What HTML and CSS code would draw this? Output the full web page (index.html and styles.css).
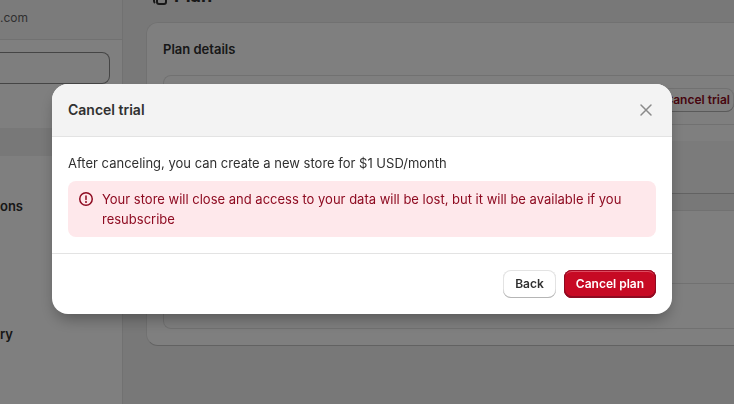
FILE: index.html
```html
<!DOCTYPE html>
<html lang="en">
<head>
    <meta charset="UTF-8">
    <meta name="viewport" content="width=device-width, initial-scale=1.0">
    <title>Cancel trial</title>
    <link rel="stylesheet" href="styles.css">
</head>
<body>
    <div class="page">
        <aside class="sidebar">
            <div class="store">.com</div>
            <div class="search">
                <input type="search" aria-label="Search settings">
            </div>
            <nav class="menu">
                <a href="#" class="active" aria-label="Plan"></a>
                <a href="#" class="permissions">ons</a>
                <a href="#" class="delivery">ry</a>
            </nav>
        </aside>

        <main class="content">
            <h1 class="page-title">
                <svg width="20" height="20" viewBox="0 0 20 20" fill="none" stroke="currentColor" stroke-width="2" aria-hidden="true">
                    <path d="M4 5v8a3 3 0 0 0 1 2"/>
                    <rect x="7" y="4" width="9" height="12" rx="2"/>
                </svg>
                Plan
            </h1>
            <section class="card">
                <div class="card-section">
                    <h2>Plan details</h2>
                    <div class="box plan-box">
                        <button type="button" class="trial-button">Cancel trial</button>
                    </div>
                </div>
                <div class="card-note"></div>
            </section>
            <section class="card">
                <div class="card-section billing">
                    <div class="box billing-box"></div>
                </div>
            </section>
        </main>
    </div>

    <div class="overlay">
        <div class="modal" role="dialog" aria-modal="true" aria-labelledby="modal-title">
            <header class="modal-header">
                <h2 id="modal-title">Cancel trial</h2>
                <button type="button" class="close" aria-label="Close">
                    <svg width="20" height="20" viewBox="0 0 20 20" fill="none" stroke="currentColor" stroke-width="1.5" stroke-linecap="round">
                        <path d="M5 5l10 10M15 5L5 15"/>
                    </svg>
                </button>
            </header>
            <div class="modal-body">
                <p>After canceling, you can create a new store for $1 USD/month</p>
                <div class="banner">
                    <svg width="20" height="20" viewBox="0 0 20 20" fill="none" stroke="currentColor" stroke-width="1.5" stroke-linecap="round" aria-hidden="true">
                        <circle cx="10" cy="10" r="6.25"/>
                        <path d="M10 7v3.5"/>
                        <circle cx="10" cy="13" r="1" fill="currentColor" stroke="none"/>
                    </svg>
                    <p>Your store will close and access to your data will be lost, but it will be available if you resubscribe</p>
                </div>
            </div>
            <footer class="modal-footer">
                <button type="button" class="btn">Back</button>
                <button type="button" class="btn btn-danger">Cancel plan</button>
            </footer>
        </div>
    </div>
</body>
</html>
```

FILE: styles.css
```css
* {
    box-sizing: border-box;
}
body {
    margin: 0;
    font-family: Inter, sans-serif;
    font-size: 13px;
    line-height: 20px;
    color: #303030;
    background: #f1f1f1;
    overflow: hidden;
}
h1, h2, p {
    margin: 0;
}
button, input {
    font: inherit;
}
a {
    color: inherit;
    text-decoration: none;
}
svg {
    flex: none;
}

/* Settings page behind the dialog */
.page {
    display: flex;
    min-height: 100vh;
}
.sidebar {
    flex: none;
    width: 123px;
    background: #fff;
    border-right: 1px solid #e3e3e3;
}
.store {
    height: 40px;
    padding: 8px 0;
    font-size: 12px;
    color: #616161;
    background: #f7f7f7;
    border-bottom: 1px solid #e3e3e3;
}
.search {
    padding: 12px 12px 12px 0;
}
.search input {
    display: block;
    width: 100%;
    height: 32px;
    border: 1px solid #8a8a8a;
    border-left: 0;
    border-radius: 0 8px 8px 0;
    background: #fdfdfd;
}
.menu {
    padding-top: 32px;
    font-weight: 600;
}
.menu a {
    display: block;
    height: 28px;
    padding: 4px 0;
}
.menu .active {
    background: #f1f1f1;
}
.menu .permissions {
    margin-top: 36px;
}
.menu .delivery {
    margin-top: 100px;
}
.content {
    flex: 1;
    min-width: 0;
    padding-left: 23px;
}
.page-title {
    display: flex;
    align-items: flex-end;
    gap: 4px;
    height: 8px;
    margin-bottom: 14px;
    padding-left: 4px;
    font-size: 18px;
    line-height: 24px;
}
.card {
    margin-bottom: 16px;
    overflow: hidden;
    background: #fff;
    border: 1px solid #e3e3e3;
    border-right: 0;
    border-bottom-color: #c4c4c4;
    border-radius: 12px 0 0 12px;
}
.card-section {
    padding: 16px 0 16px 16px;
}
.card h2 {
    margin-bottom: 16px;
    font-size: 13px;
    font-weight: 600;
}
.box {
    border: 1px solid #e3e3e3;
    border-right: 0;
    border-radius: 8px 0 0 8px;
}
.plan-box {
    display: flex;
    justify-content: flex-end;
    padding: 12px 0;
}
.trial-button {
    height: 24px;
    padding: 0 4px 0 12px;
    border: 0;
    border-radius: 8px;
    color: #8e0b21;
    background: #fff;
    box-shadow: inset 0 -1px 0 #b5b5b5, inset 0 0 0 1px #e3e3e3;
    font-size: 12px;
    font-weight: 600;
}
.card-note {
    height: 52px;
    background: #f7f7f7;
}
.billing {
    padding-top: 72px;
}
.billing-box {
    height: 46px;
}

/* Dialog */
.overlay {
    position: fixed;
    inset: 0;
    display: flex;
    align-items: center;
    justify-content: center;
    padding: 0 62px 6px 52px;
    background: rgba(0, 0, 0, 0.5);
}
.modal {
    flex: 1;
    max-width: 620px;
    overflow: hidden;
    background: #fff;
    border-radius: 16px;
    box-shadow: 0 8px 16px -4px rgba(0, 0, 0, 0.35);
}
.modal-header {
    display: flex;
    align-items: center;
    justify-content: space-between;
    padding: 16px;
    background: #f3f3f3;
    border-bottom: 1px solid #e3e3e3;
}
.modal-header h2 {
    font-size: 14px;
    font-weight: 600;
}
.close {
    display: flex;
    padding: 0;
    border: 0;
    color: #8a8a8a;
    background: none;
    cursor: pointer;
}
.modal-body {
    padding: 16px;
}
.banner {
    display: flex;
    gap: 6px;
    margin-top: 8px;
    padding: 8px;
    color: #8e0b21;
    background: #fee8eb;
    border-radius: 8px;
}
.modal-footer {
    display: flex;
    justify-content: flex-end;
    gap: 8px;
    padding: 16px;
    border-top: 1px solid #e3e3e3;
}
.btn {
    height: 28px;
    padding: 0 12px;
    border: 0;
    border-radius: 8px;
    color: #303030;
    background: #fff;
    box-shadow: inset 0 -1px 0 #b5b5b5, inset 0 0 0 1px #e3e3e3;
    font-size: 12px;
    font-weight: 600;
    cursor: pointer;
}
.btn-danger {
    color: #fff;
    background: #c70a24;
    box-shadow: inset 0 -1px 0 1px #8e0b21, inset 0 0 0 1px #a30a24, inset 0 2px 0 #dd4b5f;
}
```
